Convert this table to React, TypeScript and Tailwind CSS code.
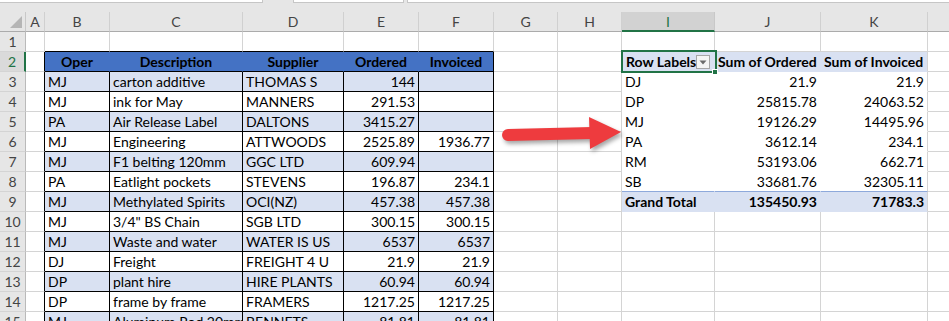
const COL_LETTERS = ["A", "B", "C", "D", "E", "F", "G", "H", "I", "J", "K", "L"];

// data table B2:F15
const orders = [
  ["MJ", "carton additive", "THOMAS S", "144", ""],
  ["MJ", "ink for May", "MANNERS", "291.53", ""],
  ["PA", "Air Release Label", "DALTONS", "3415.27", ""],
  ["MJ", "Engineering", "ATTWOODS", "2525.89", "1936.77"],
  ["MJ", "F1 belting 120mm", "GGC LTD", "609.94", ""],
  ["PA", "Eatlight pockets", "STEVENS", "196.87", "234.1"],
  ["MJ", "Methylated Spirits", "OCI(NZ)", "457.38", "457.38"],
  ["MJ", '3/4" BS Chain', "SGB LTD", "300.15", "300.15"],
  ["MJ", "Waste and water", "WATER IS US", "6537", "6537"],
  ["DJ", "Freight", "FREIGHT 4 U", "21.9", "21.9"],
  ["DP", "plant hire", "HIRE PLANTS", "60.94", "60.94"],
  ["DP", "frame by frame", "FRAMERS", "1217.25", "1217.25"],
  ["MJ", "Aluminum Rod 20mm", "BENNETS", "81.81", "81.81"],
];

// pivot I2:K9
const pivot = [
  ["DJ", "21.9", "21.9"],
  ["DP", "25815.78", "24063.52"],
  ["MJ", "19126.29", "14495.96"],
  ["PA", "3612.14", "234.1"],
  ["RM", "53193.06", "662.71"],
  ["SB", "33681.76", "32305.11"],
  ["Grand Total", "135450.93", "71783.3"],
];

function cellValue(r: number, c: number): string {
  if (r === 2 && c >= 1 && c <= 5) return ["Oper", "Description", "Supplier", "Ordered", "Invoiced"][c - 1];
  if (r >= 3 && c >= 1 && c <= 5) return orders[r - 3]?.[c - 1] ?? "";
  if (r === 2 && c >= 9 && c <= 10) return c === 9 ? "Sum of Ordered" : "Sum of Invoiced";
  if (r >= 3 && r <= 9 && c >= 8 && c <= 10) return pivot[r - 3][c - 8];
  return "";
}

function cellClass(r: number, c: number) {
  const inTable = c >= 1 && c <= 5 && r >= 2;
  const inPivot = c >= 8 && c <= 10 && r >= 2 && r <= 9;
  let bg = "bg-white";
  let br = "border-r-[#d4d4d4]";
  let bb = "border-b-[#d4d4d4]";
  let align = "justify-start";
  let weight = "font-normal";

  if (inTable) {
    br = "border-r-black";
    bb = "border-b-black";
    if (r === 2) {
      bg = "bg-[#4472c4]";
      if (c < 5) br = "border-r-[#4472c4]";
      align = "justify-center";
      weight = "font-bold";
    } else {
      if (r % 2 === 1) bg = "bg-[#d9e1f2]";
      if (c >= 4) align = "justify-end";
    }
  }
  if (c === 0 && r >= 2) br = "border-r-black";
  if (r === 1 && c >= 1 && c <= 5) bb = "border-b-black";

  if (inPivot) {
    const band = r === 2 || r === 9;
    bg = band ? "bg-[#d9e1f2]" : "bg-white";
    bb = r === 8 ? "border-b-[#8ea9db]" : band ? "border-b-[#d9e1f2]" : "border-b-white";
    br = c === 10 ? "border-r-[#d4d4d4]" : band ? "border-r-[#d9e1f2]" : "border-r-white";
    if (band) weight = "font-bold";
    if (c >= 9 && r >= 3) align = "justify-end";
  }

  return `${bg} ${br} ${bb} ${align} ${weight}`;
}

function RowLabelsHeader() {
  return (
    <div className="flex h-[20px] items-center justify-between whitespace-nowrap border-r border-b border-r-[#d9e1f2] border-b-[#d9e1f2] bg-[#d9e1f2] pt-[1px] pl-[4px] pr-[4px] font-bold">
      <span>Row Labels</span>
      <span className="flex h-[14px] w-[14px] items-center justify-center border border-[#a6a6a6] bg-[#f4f4f4]">
        <svg width="8" height="5" viewBox="0 0 8 5">
          <path d="M0.5 0.5 L7.5 0.5 L4 4.5 Z" fill="#6b6b6b" />
        </svg>
      </span>
    </div>
  );
}

export default function App() {
  const rows = Array.from({ length: 15 }, (_, i) => i + 1);

  return (
    <div className="relative h-[321px] w-[949px] overflow-hidden bg-white font-['Lato',sans-serif] text-[14px] leading-none text-black">
      {/* formula bar remnant */}
      <div className="h-[12px] bg-[#e6e6e6]">
        <div className="flex h-[3px]">
          <div className="w-[263px] border-r border-b border-[#c6c6c6] bg-white" />
          <div className="w-[30px]" />
          <div className="w-[111px] border-x border-b border-[#c6c6c6] bg-white" />
          <div className="w-[3px]" />
          <div className="flex-1 border-l border-b border-[#c6c6c6] bg-white" />
        </div>
      </div>

      <div className="grid w-max grid-cols-[26px_19px_65px_133px_101px_75px_75px_64px_64px_93px_106px_107px_64px] auto-rows-[20px]">
        {/* corner */}
        <div className="relative border-r border-b border-r-[#c8c8c8] border-b-[#ababab] bg-[#e6e6e6]">
          <svg className="absolute right-[3px] bottom-[3px]" width="12" height="12" viewBox="0 0 12 12">
            <path d="M12 0 L12 12 L0 12 Z" fill="#b5b5b5" />
          </svg>
        </div>
        {COL_LETTERS.map((l) =>
          l === "I" ? (
            <div
              key={l}
              className="flex items-center justify-center border-r border-b-2 border-r-[#c8c8c8] border-b-[#217346] bg-[#d2d2d2] pt-[1px] text-[14px] text-[#217346]"
            >
              {l}
            </div>
          ) : (
            <div
              key={l}
              className="flex items-center justify-center border-r border-b border-r-[#d0d0d0] border-b-[#ababab] bg-[#e6e6e6] text-[14px] text-[#444]"
            >
              {l}
            </div>
          )
        )}

        {rows.map((r) => (
          <div key={r} className="contents">
            {r === 2 ? (
              <div className="flex items-center justify-center border-r-2 border-b border-r-[#217346] border-b-[#d4d4d4] bg-[#dadada] text-[14px] text-[#217346]">
                {r}
              </div>
            ) : (
              <div className="flex items-center justify-center border-r border-b border-r-[#bababa] border-b-[#d4d4d4] bg-[#e6e6e6] text-[14px] text-[#444]">
                {r}
              </div>
            )}
            {COL_LETTERS.map((_, c) =>
              r === 2 && c === 8 ? (
                <RowLabelsHeader key={c} />
              ) : (
                <div
                  key={c}
                  className={`flex h-[20px] items-center overflow-hidden whitespace-nowrap border-r border-b px-[3px] pt-[1px] ${cellClass(r, c)}`}
                >
                  {cellValue(r, c)}
                </div>
              )
            )}
          </div>
        ))}
      </div>

      {/* active cell I2 */}
      <div className="pointer-events-none absolute top-[50px] left-[621px] h-[23px] w-[96px] border-2 border-[#217346]" />
      <div className="pointer-events-none absolute top-[69px] left-[712px] h-[6px] w-[6px] border border-white bg-[#217346]" />

      {/* red arrow */}
      <svg
        className="pointer-events-none absolute top-[110px] left-[495px] drop-shadow-[2px_3px_2px_rgba(0,0,0,0.35)]"
        width="135"
        height="48"
        viewBox="495 110 135 48"
      >
        <path
          d="M508 129 L592 127 L592 139 L508 141 A6 6 0 0 1 508 129 Z"
          fill="#ee3b3e"
        />
        <path d="M589 117 L621 132 L590 149 Z" fill="#ee3b3e" />
      </svg>
    </div>
  );
}
